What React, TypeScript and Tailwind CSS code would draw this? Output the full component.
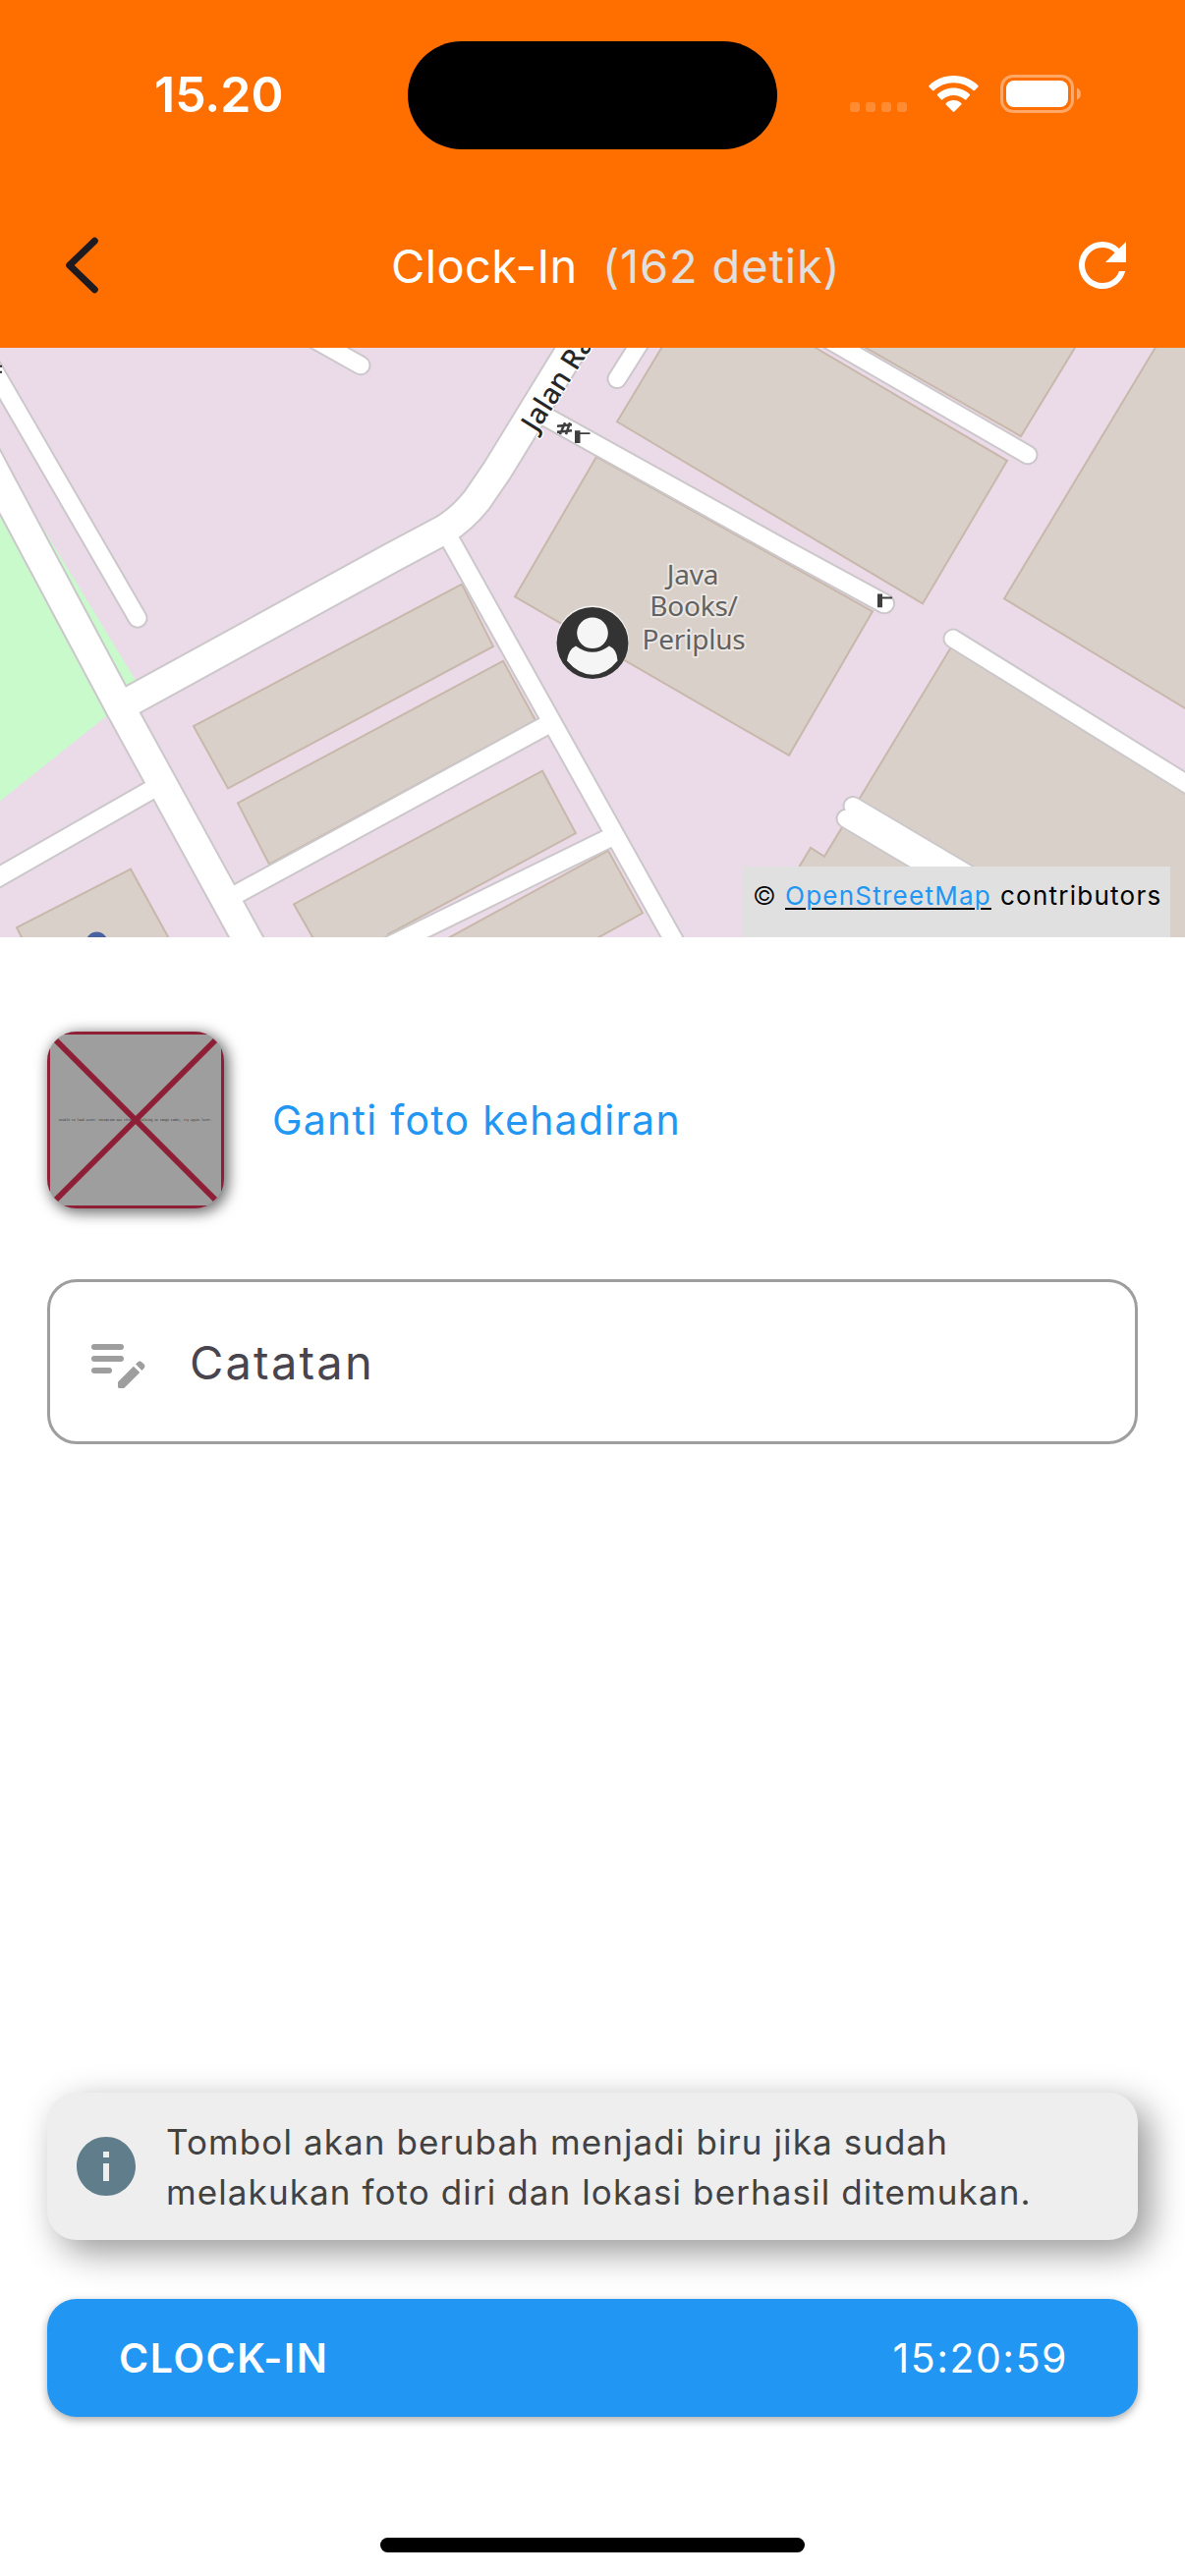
import { MdInfo, MdRefresh } from "react-icons/md";

const buildings = [
  "197,743 470,597 502,661 232,807",
  "242,822 512,676 545,737 274,885",
  "299,926 552,789 586,853 395,957 390,972 325,972",
  "436,972 619,871 654,935 588,972",
  "17,950 133,890 180,976 30,976",
  "607,466 524,610 803,773 888,625",
  "628,430 690,326 785,326 830,354 1025,470 939,617",
  "850,336 1039,445 1106,334",
  "1190,330 1022,612 1215,730 1215,330",
  "972,655 1215,806 1215,972 763,972 825,868 839,877",
];

const roads = [
  { d: "M-30 435L0 492L122 723L256 970", w: 32 },
  { d: "M122 723L400 569L452 541Q470 530 485 511L506 480L597 330", w: 32 },
  { d: "M-20 353L140 632", w: 20 },
  { d: "M300 334L367 372", w: 20 },
  { d: "M-10 903L160 805", w: 21 },
  { d: "M240 916L560 740", w: 21 },
  { d: "M459 553L690 971", w: 21 },
  { d: "M394 970L618 859", w: 21 },
  { d: "M552 423L800 562L900 617", w: 21 },
  { d: "M820 332L1046 464", w: 20 },
  { d: "M663 330L628 386", w: 20 },
  { d: "M970 653L1220 810", w: 20 },
  { d: "M868 825L1000 904", w: 20 },
  { d: "M861 838L981 910", w: 20 },
];

function CityMap() {
  return (
    <svg className="block h-[600px] w-full" viewBox="0 354 1206 606" preserveAspectRatio="none">
      <rect x="0" y="354" width="1206" height="606" fill="#ebdbe8" />
      <polygon points="0,455 7,478 138,696 125,715 108,733 0,820" fill="#c8facc" />
      {buildings.map((points) => (
        <polygon key={points} points={points} fill="#d9d0c9" stroke="#c8b8ab" strokeWidth="2" />
      ))}
      <circle cx="98.500" cy="965.500" r="11" fill="#4863a0" />
      <g fill="none" strokeLinecap="round" strokeLinejoin="round">
        {roads.map((r) => (
          <path key={r.d} d={r.d} stroke="#cbc7ca" strokeWidth={r.w + 1} />
        ))}
        {roads.map((r) => (
          <path key={r.d} d={r.d} stroke="#fff" strokeWidth={r.w - 3} />
        ))}
      </g>
      <path d="M0 373h2M0 379h2" stroke="#222" strokeWidth="2" />
      <g stroke="#3f3f3f" strokeWidth="2.500">
        <path d="M567 434.500L582 433M567 440.500L582 439M570 443L575 431M576 443L580 431" fill="none" />
        <path d="M585 439h5.500v2h10v2h-10v9h-5.500z" fill="#3f3f3f" stroke="none" />
        <path d="M893 607h5v3h10v2h-10v9h-5z" fill="#3f3f3f" stroke="none" />
      </g>
      <g fontFamily="'Noto Sans', sans-serif" paintOrder="stroke" strokeLinejoin="round">
        <text transform="translate(546 442) rotate(-57.5)" fontSize="29" fontWeight="500" fill="#262626" stroke="#fff" strokeWidth="3">
          Jalan Ra
        </text>
        <g fontSize="28" fontWeight="450" letterSpacing="-0.2" fill="#626262" stroke="#ece7e3" strokeWidth="4" textAnchor="middle">
          <text x="705" y="597">Java</text>
          <text x="706" y="630">Books/</text>
          <text x="706" y="664">Periplus</text>
        </g>
      </g>
    </svg>
  );
}

function Marker() {
  return (
    <svg className="absolute left-[565px] top-[262px] h-[76px] w-[76px]" viewBox="565 616 76 76">
      <circle cx="603" cy="653.500" r="37" fill="#f4f4f4" />
      <circle cx="603" cy="654.500" r="36.500" fill="#333" />
      <circle cx="603" cy="644.300" r="15.800" fill="#f5f5f5" />
      <path
        d="M586 657.500Q594.500 663.800 603 663.800T620 657.500Q628 661 628.500 672.500Q617 686.700 603 686.700T577 672.500Q578.500 661 586 657.500Z"
        fill="#f5f5f5"
      />
    </svg>
  );
}

function StatusBar() {
  return (
    <div className="relative flex h-[186px] items-start justify-between">
      <span className="ml-[157px] mt-[65px] text-[50px] font-semibold leading-[62px] text-white">15.20</span>
      <div className="absolute left-[415px] top-[42px] h-[110px] w-[376px] rounded-full bg-black" />
      <div className="mr-[106px] mt-[76px] flex items-start">
        <div className="mr-[22px] mt-7 flex gap-[6px]">
          {[0, 1, 2, 3].map((i) => (
            <span key={i} className="h-[10px] w-[10px] rounded-[3px] bg-white/20" />
          ))}
        </div>
        <svg className="mr-[22px] h-[39px] w-[51px]" viewBox="0 0 51 39" fill="#fff">
          <path d="M25.500 1C35.500 1 44.500 5 50.400 11Q51 11.700 50.400 12.400L47 16Q46.200 16.800 45.400 16C40 11 33 8.200 25.500 8.200S11 11 5.600 16Q4.800 16.800 4 16L.6 12.400Q0 11.700 .6 11C6.500 5 15.500 1 25.500 1Z" />
          <path d="M25.500 13.500C32 13.500 37.700 16 41.900 19.900Q42.500 20.600 41.900 21.300L38.300 25.200Q37.500 25.900 36.800 25.200C33.800 22.500 29.800 20.900 25.500 20.900S17.200 22.500 14.200 25.200Q13.500 25.900 12.700 25.200L9.100 21.300Q8.500 20.600 9.100 19.900C13.300 16 19 13.500 25.500 13.500Z" />
          <path d="M25.500 26C28.500 26 31.300 27.100 33.300 29Q34 29.700 33.300 30.500L26.300 37.600Q25.500 38.400 24.700 37.600L17.700 30.500Q17 29.700 17.700 29C19.700 27.100 22.500 26 25.500 26Z" />
        </svg>
        <svg className="h-[39px] w-[82px]" viewBox="0 0 82 39">
          <rect x="1.500" y="1.500" width="72" height="36" rx="11.500" fill="none" stroke="#ffa766" strokeWidth="3" />
          <rect x="6" y="6" width="63" height="27" rx="8" fill="#fff" />
          <path d="M78 13.500Q82 15 82 19.500T78 25.500Z" fill="#ffa766" />
        </svg>
      </div>
    </div>
  );
}

function AppBar() {
  return (
    <div className="flex h-[168px] items-center">
      <svg className="ml-[60px] h-[60px] w-[48px]" viewBox="60 240 48 60" fill="none">
        <path d="M96.300 245.300L70.700 270L96.300 294.700" stroke="#1d1b20" strokeWidth="7" strokeLinecap="round" strokeLinejoin="round" />
      </svg>
      <div className="ml-[290px] flex whitespace-pre pt-[2px] text-[47px] font-[370] leading-[56px] text-white">
        <span className="w-[215px] tracking-[0.4px]">Clock-In</span>
        <span className="tracking-[0.85px] text-[#e0e0e0]">(162 detik)</span>
      </div>
      <MdRefresh className="ml-auto mr-12 h-[72px] w-[72px] text-white" />
    </div>
  );
}

function BrokenPhoto() {
  return (
    <div className="h-[180px] w-[180px] rounded-[30px] bg-[#9e9e9e] shadow-[3px_3px_14px_2px_rgba(0,0,0,0.55)]">
      <div className="h-full w-full overflow-hidden rounded-[30px]">
        <svg className="block h-full w-full" viewBox="0 0 180 180">
          <rect x="1.500" y="1.500" width="177" height="177" fill="none" stroke="#8f1f36" strokeWidth="3" />
          <text x="12" y="91" fontSize="3" textLength="156" fill="#333" fontFamily="'Liberation Mono', monospace">
            Unable to load asset: exception was thrown resolving an image codec, try again later.
          </text>
          <path d="M9 9L171 171M171 9L9 171" stroke="#8f1f36" strokeWidth="6" />
        </svg>
      </div>
    </div>
  );
}

function EditNoteIcon() {
  return (
    <svg className="h-[72px] w-[72px]" viewBox="0 0 24 24" fill="#9e9e9e">
      <path d="M4 7h9M4 11h9M4 15h5" stroke="#9e9e9e" strokeWidth="2" strokeLinecap="round" />
      <path d="M18.010 12.870l.71-.71c.39-.39 1.020-.39 1.410 0l.71.71c.39.39.39 1.020 0 1.410l-.71.71-2.120-2.120zM17.300 13.580l-5.160 5.160c-.09.09-.14.21-.14.35v1.410c0 .28.22.5.5.5h1.410c.13 0 .26-.05.35-.15l5.160-5.160-2.120-2.110z" />
    </svg>
  );
}

export default function App() {
  return (
    <div className="flex h-[2622px] w-[1206px] flex-col overflow-hidden bg-white font-['Inter',sans-serif]">
      <header className="h-[354px] shrink-0 bg-[#ff6f00]">
        <StatusBar />
        <AppBar />
      </header>

      <section className="relative h-[600px] shrink-0">
        <CityMap />
        <Marker />
        <div className="absolute bottom-0 right-[15px] flex h-[72px] w-[435px] whitespace-pre bg-[#e0e0e0] pl-[10px] pt-[14px] text-[26px] font-[370] leading-[32px] tracking-[1.25px] text-black">
          <span className="w-[33px] font-light">©</span>
          <span className="w-[219px]">
            <span className="text-[#2196f3] underline decoration-black decoration-[1.5px] underline-offset-[3px]">OpenStreetMap</span>
          </span>
          <span>contributors</span>
        </div>
      </section>

      <main className="flex flex-1 flex-col px-12">
        <div className="mt-24 flex items-center gap-[49px]">
          <BrokenPhoto />
          <span className="text-[41px] font-[370] leading-[50px] tracking-[1.25px] text-[#2196f3]">Ganti foto kehadiran</span>
        </div>

        <div className="mt-[72px] flex h-[168px] items-center rounded-[30px] border-[3px] border-[#9e9e9e] pl-[33px]">
          <EditNoteIcon />
          <span className="ml-[37px] pt-[2px] text-[47px] font-[370] leading-[56px] tracking-[2.2px] text-[#49454f]">Catatan</span>
        </div>

        <div className="mt-auto flex h-[150px] items-center rounded-[30px] bg-[#eeeeee] pl-6 shadow-[12px_12px_36px_rgba(0,0,0,0.41)]">
          <MdInfo className="h-[72px] w-[72px] text-[#607d8b]" />
          <p className="ml-[25px] whitespace-pre pt-[2px] text-[35px] font-[370] leading-[51px] tracking-[1.1px] text-[#424242]">
            Tombol akan berubah menjadi biru jika sudah{"\n"}melakukan foto diri dan lokasi berhasil ditemukan.
          </p>
        </div>

        <button className="mt-[60px] flex h-[120px] items-center justify-between rounded-[30px] bg-[#2196f3] pl-[73px] pr-[71px] text-[41px] leading-[50px] text-white shadow-[0_3px_9px_rgba(0,0,0,0.35)]">
          <span className="font-semibold tracking-[1.6px]">CLOCK-IN</span>
          <span className="font-[370] tracking-[1.5px]">15:20:59</span>
        </button>
        <div className="mb-6 mt-[123px] h-[15px] w-[432px] self-center rounded-full bg-black" />
      </main>
    </div>
  );
}
